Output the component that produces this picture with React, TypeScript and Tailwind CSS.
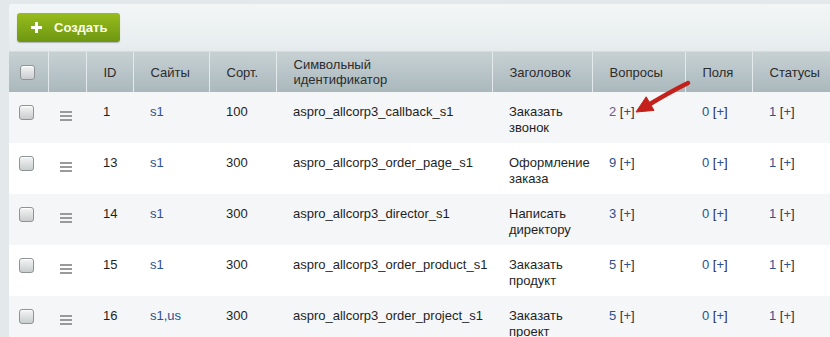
import React from 'react';

type Row = {
    id: string;
    sites: string;
    sort: string;
    code: string;
    title: string[];
    questions: string;
    visited?: boolean;
};

const rows: Row[] = [
    { id: '1', sites: 's1', sort: '100', code: 'aspro_allcorp3_callback_s1', title: ['Заказать', 'звонок'], questions: '2', visited: true },
    { id: '13', sites: 's1', sort: '300', code: 'aspro_allcorp3_order_page_s1', title: ['Оформление', 'заказа'], questions: '9' },
    { id: '14', sites: 's1', sort: '300', code: 'aspro_allcorp3_director_s1', title: ['Написать', 'директору'], questions: '3' },
    { id: '15', sites: 's1', sort: '300', code: 'aspro_allcorp3_order_product_s1', title: ['Заказать', 'продукт'], questions: '5' },
    { id: '16', sites: 's1,us', sort: '300', code: 'aspro_allcorp3_order_project_s1', title: ['Заказать', 'проект'], questions: '5' },
];

const Checkbox = () => (
    <span className="block w-[15px] h-[15px] rounded-[3px] border border-[#8e9496] bg-gradient-to-b from-[#f4f5f5] to-[#c9cdce] shadow-[inset_0_1px_0_#fff]" />
);

const Grip = () => (
    <span className="flex flex-col gap-[2px] w-[12px]">
        <span className="h-[2px] bg-[#9a9a9a]" />
        <span className="h-[2px] bg-[#9a9a9a]" />
        <span className="h-[2px] bg-[#9a9a9a]" />
    </span>
);

const Counter = ({ n, visited }: { n: string; visited?: boolean }) => (
    <span className="whitespace-nowrap">
        <span className={visited ? 'text-[#6b5b8c]' : 'text-[#2a5190]'}>{n}</span>{' '}
        <span className="text-[#2b2b3f]">[</span>
        <span className="text-[#2a5190]">+</span>
        <span className="text-[#2b2b3f]">]</span>
    </span>
);

const headCell = 'h-[40px] px-[17px] align-middle text-left font-normal text-[#2c2c2c] border-l border-[#e4eaec] leading-[15px]';
const bodyCell = 'px-[17px] pt-[12px] align-top leading-[16px]';

const App: React.FC = () => {
    return (
        <div className="w-[830px] h-[337px] overflow-hidden bg-[#e3e9eb] pl-[9px] pt-[4px] font-['Liberation_Sans',Arial,sans-serif] text-[13px] text-[#1f1f1f]">
            <div className="relative w-[900px] bg-white rounded-tl-[4px] overflow-hidden">
                {/* Toolbar */}
                <div className="h-[48px] flex items-start pt-[9px] pl-[8px] bg-gradient-to-b from-[#f3f6f6] to-[#e6ecee] border-b border-[#d3dbde]">
                    <button className="h-[29px] w-[103px] flex items-center gap-[12px] pl-[14px] rounded-[3px] bg-gradient-to-b from-[#98bd1d] to-[#6d9611] shadow-[0_1px_1px_rgba(0,0,0,0.25)] text-[#fbffe8] font-bold text-[13px]">
                        <svg width="11" height="11" viewBox="0 0 11 11">
                            <path d="M4 0h3v4h4v3H7v4H4V7H0V4h4z" fill="#ffffff" />
                        </svg>
                        Создать
                    </button>
                </div>

                <table className="table-fixed border-collapse w-[900px]">
                    <colgroup>
                        <col className="w-[39px]" />
                        <col className="w-[38px]" />
                        <col className="w-[47px]" />
                        <col className="w-[76px]" />
                        <col className="w-[67px]" />
                        <col className="w-[216px]" />
                        <col className="w-[100px]" />
                        <col className="w-[93px]" />
                        <col className="w-[67px]" />
                        <col className="w-[157px]" />
                    </colgroup>
                    <thead>
                        <tr className="bg-gradient-to-b from-[#c7d1d4] to-[#aab8bc]">
                            <th className="h-[40px] pl-[11px] align-middle border-[#e4eaec]">
                                <Checkbox />
                            </th>
                            <th className={headCell} />
                            <th className={headCell}>ID</th>
                            <th className={headCell}>Сайты</th>
                            <th className={headCell}>Сорт.</th>
                            <th className={headCell}>Символьный<br />идентификатор</th>
                            <th className={headCell}>Заголовок</th>
                            <th className={headCell}>Вопросы</th>
                            <th className={headCell}>Поля</th>
                            <th className={headCell}>Статусы</th>
                        </tr>
                    </thead>
                    <tbody>
                        {rows.map((r, i) => (
                            <tr key={r.id} className={i % 2 === 0 ? 'h-[51px] bg-[#f4f6f7]' : 'h-[51px] bg-white'}>
                                <td className="pl-[10px] pt-[13px] align-top"><Checkbox /></td>
                                <td className="pl-[12px] pt-[19px] align-top"><Grip /></td>
                                <td className={bodyCell}>{r.id}</td>
                                <td className={bodyCell + ' text-[#2a5190]'}>{r.sites}</td>
                                <td className={bodyCell}>{r.sort}</td>
                                <td className={bodyCell}>{r.code}</td>
                                <td className={bodyCell}>{r.title[0]}<br />{r.title[1]}</td>
                                <td className={bodyCell}><Counter n={r.questions} visited={r.visited} /></td>
                                <td className={bodyCell}><Counter n="0" /></td>
                                <td className={bodyCell}><Counter n="1" /></td>
                            </tr>
                        ))}
                    </tbody>
                </table>

                {/* Annotation arrow */}
                <svg className="absolute left-[621px] top-[74px] pointer-events-none" width="65" height="40" viewBox="0 0 65 40">
                    <path d="M58 5 Q40 14 20 26" stroke="#c5211c" strokeWidth="4.5" strokeLinecap="round" fill="none" />
                    <path d="M6 34 L16.2 18.8 L24 32.4 Z" fill="#c5211c" stroke="#c5211c" strokeWidth="1" strokeLinejoin="round" />
                </svg>
            </div>
        </div>
    );
};

export default App;
